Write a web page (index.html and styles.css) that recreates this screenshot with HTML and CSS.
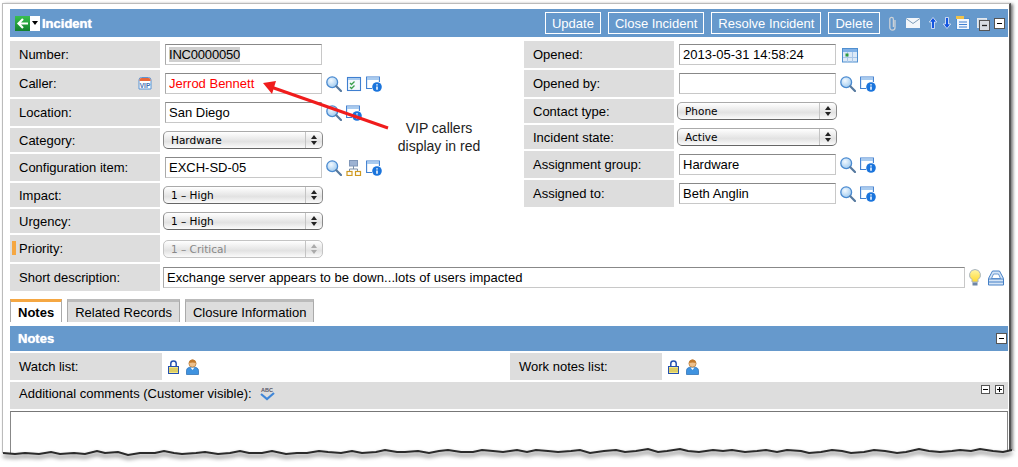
FILE: index.html
```html
<!DOCTYPE html>
<html lang="en">
<head>
    <meta charset="UTF-8">
    <title>Incident</title>
    <link rel="stylesheet" href="styles.css">
</head>
<body>
<svg width="0" height="0" class="defs">
    <defs>
        <radialGradient id="g-lens" cx=".4" cy=".35" r=".7">
            <stop offset="0" stop-color="#f2f9ff"/>
            <stop offset="1" stop-color="#9cc8ee"/>
        </radialGradient>
        <linearGradient id="g-back" x1="0" y1="0" x2="0" y2="1">
            <stop offset="0" stop-color="#39c04e"/>
            <stop offset="1" stop-color="#12802c"/>
        </linearGradient>
        <linearGradient id="g-bulb" x1="0" y1="0" x2="0" y2="1">
            <stop offset="0" stop-color="#fff6a8"/>
            <stop offset="1" stop-color="#ffd92e"/>
        </linearGradient>
    </defs>
    <symbol id="i-search" viewBox="0 0 16 16">
        <circle cx="6.200" cy="6.200" r="5.400" fill="url(#g-lens)" stroke="#4a8ad0" stroke-width="1.300"/>
        <path d="M10.300 10.300l4.700 4.700" stroke="#56799f" stroke-width="2.200" stroke-linecap="round"/>
    </symbol>
    <symbol id="i-info" viewBox="0 0 16 16">
        <path d="M6 12.500H.6V1h12.800v5" fill="#fff" stroke="#3f7fd0" stroke-width="1.100"/>
        <rect x="1" y="1.500" width="12" height="2.500" fill="#a9cbef"/>
        <circle cx="11" cy="11" r="4.800" fill="#1a74dc"/>
        <path d="M11 8.200v1.200M11 10.400v3.400" stroke="#fff" stroke-width="1.500"/>
    </symbol>
    <symbol id="i-lock" viewBox="0 0 11 14">
        <path d="M2.800 7V3.600a2.700 2.700 0 0 1 5.400 0V7" fill="none" stroke="#2450b0" stroke-width="1.500"/>
        <rect x=".5" y="6.500" width="10" height="7" fill="#f4e67e" stroke="#2450b0"/>
        <path d="M1 9h9M1 11h9" stroke="#b9a53c" stroke-width=".8"/>
    </symbol>
    <symbol id="i-user" viewBox="0 0 13 16">
        <path d="M.5 15.500v-4c0-2.500 2.500-3.500 6-3.500s6 1 6 3.500v4z" fill="#3f93e0" stroke="#2468b0" stroke-width=".7"/>
        <path d="M4.500 8.500l2 2.500 2-2.500z" fill="#fff"/>
        <circle cx="6.500" cy="4.500" r="3.600" fill="#eec08c" stroke="#b3762f" stroke-width=".7"/>
        <path d="M3 4c.5-2.500 2-3.500 3.500-3.500S9.500 1.500 10 4C8 3.200 5 3.200 3 4z" fill="#c47a2c"/>
    </symbol>
</svg>

<div class="frame">
    <header class="bar">
        <span class="back">
            <svg width="15" height="15" viewBox="0 0 15 15"><rect width="15" height="15" fill="url(#g-back)"/><path d="M13 7.500H4.500M8 3l-4.500 4.500L8 12" fill="none" stroke="#fff" stroke-width="2.200"/></svg>
            <i class="caret"></i>
        </span>
        <h1>Incident</h1>
        <div class="bar-right">
            <button class="btn">Update</button>
            <button class="btn">Close Incident</button>
            <button class="btn">Resolve Incident</button>
            <button class="btn">Delete</button>
            <svg class="tool-clip" width="9" height="15" viewBox="0 0 9 15"><path d="M7 4v7.500a2.600 2.600 0 0 1-5.200 0V3.200a1.800 1.800 0 0 1 3.600 0V11" fill="none" stroke="#ccd2d8" stroke-width="1.300"/></svg>
            <svg class="tool-mail" width="14" height="10" viewBox="0 0 14 10"><rect width="14" height="10" fill="#f2f6fa"/><path d="M0 .5l7 5 7-5" fill="none" stroke="#7f9db8"/></svg>
            <svg class="tool-up" width="8" height="12" viewBox="0 0 8 12"><path d="M4 .5L7.700 5H5.500v6.500h-3V5H.3z" fill="#1456e0" stroke="#fff" stroke-width=".7"/></svg>
            <svg class="tool-down" width="8" height="12" viewBox="0 0 8 12"><path d="M4 11.500L7.700 7H5.500V.5h-3V7H.3z" fill="#1456e0" stroke="#fff" stroke-width=".7"/></svg>
            <svg class="tool-list" width="14" height="14" viewBox="0 0 14 14"><rect x=".5" y="2.500" width="13" height="11" fill="#f2f7fd" stroke="#4f8fd0"/><rect width="8" height="3" fill="#f0c24a"/><path d="M3 6h8M3 8.500h8M3 11h8" stroke="#3f7fd0"/></svg>
            <svg class="tool-split" width="13" height="13" viewBox="0 0 13 13"><rect x=".5" y=".5" width="9" height="9" fill="#cfd9e4" stroke="#e4e9ee"/><rect x="2.500" y="2.500" width="10" height="10" fill="#d8dde2" stroke="#555"/><path d="M5 7.500h5" stroke="#222" stroke-width="1.300"/></svg>
            <span class="box box-end"></span>
        </div>
    </header>

    <div class="form">
        <div class="col">
            <div class="row">
                <label class="lbl">Number:</label>
                <div class="val"><div class="txt txt-div"><span class="hl">INC0000050</span></div></div>
            </div>
            <div class="row">
                <label class="lbl">Caller:
                    <svg class="vip" width="14" height="13" viewBox="0 0 14 13"><path d="M1 12V3q0-2.500 2.500-2.500h7Q13 .5 13 3v9z" fill="#fff" stroke="#5a94d4"/><path d="M1.500 4V3q0-2 2-2h7q2 0 2 2v1z" fill="#e8683a"/><text x="7" y="10.500" class="vip-t">VIP</text></svg>
                </label>
                <div class="val">
                    <input class="txt txt-red" value="Jerrod Bennett">
                    <svg class="ic"><use href="#i-search"/></svg>
                    <svg class="ic" viewBox="0 0 16 16"><rect x="1.500" y="1.500" width="13" height="13" fill="#f3f8fd" stroke="#3f7fd0" stroke-width="1.100"/><rect x="2" y="2" width="12" height="2" fill="#a9cbef"/><path d="M4 7l1.500 1.500L8.500 5.500M4 11l1.500 1.500 3-3" fill="none" stroke="#3aa04a" stroke-width="1.300"/></svg>
                    <svg class="ic"><use href="#i-info"/></svg>
                </div>
            </div>
            <div class="row">
                <label class="lbl">Location:</label>
                <div class="val">
                    <input class="txt" value="San Diego">
                    <svg class="ic"><use href="#i-search"/></svg>
                    <svg class="ic"><use href="#i-info"/></svg>
                </div>
            </div>
            <div class="row row-s">
                <label class="lbl">Category:</label>
                <div class="val"><div class="sel">Hardware</div></div>
            </div>
            <div class="row">
                <label class="lbl">Configuration item:</label>
                <div class="val">
                    <input class="txt" value="EXCH-SD-05">
                    <svg class="ic"><use href="#i-search"/></svg>
                    <svg class="ic" viewBox="0 0 16 16"><path d="M7.500 6v3M3.500 12V9h8v3" fill="none" stroke="#7a8ea8"/><rect x="3.500" y=".5" width="8" height="5.500" fill="#9db2d2" stroke="#7f96b8"/><rect x="1" y="11.500" width="5" height="4" fill="#fff" stroke="#d09a20" stroke-width="1.200"/><rect x="9.500" y="11.500" width="5" height="4" fill="#fff" stroke="#d09a20" stroke-width="1.200"/></svg>
                    <svg class="ic"><use href="#i-info"/></svg>
                </div>
            </div>
            <div class="row row-s">
                <label class="lbl">Impact:</label>
                <div class="val"><div class="sel">1 – High</div></div>
            </div>
            <div class="row row-s">
                <label class="lbl">Urgency:</label>
                <div class="val"><div class="sel">1 – High</div></div>
            </div>
            <div class="row">
                <label class="lbl lbl-mark">Priority:</label>
                <div class="val"><div class="sel sel-off">1 – Critical</div></div>
            </div>
        </div>

        <div class="col">
            <div class="row">
                <label class="lbl">Opened:</label>
                <div class="val">
                    <input class="txt" value="2013-05-31 14:58:24">
                    <svg class="ic ic-cal" viewBox="0 0 16 16"><rect x=".5" y="1.500" width="15" height="13.500" fill="#dce9f7" stroke="#4f8fd0"/><rect x="1" y="2" width="14" height="3" fill="#7fb0e6"/><path d="M1 10.500h14M5.500 5v10M10.500 5v10" stroke="#a9c6e8"/><rect x="3.500" y="6.500" width="3" height="3" fill="#2f9a42"/></svg>
                </div>
            </div>
            <div class="row">
                <label class="lbl">Opened by:</label>
                <div class="val">
                    <input class="txt" value="">
                    <svg class="ic"><use href="#i-search"/></svg>
                    <svg class="ic"><use href="#i-info"/></svg>
                </div>
            </div>
            <div class="row row-s">
                <label class="lbl">Contact type:</label>
                <div class="val"><div class="sel">Phone</div></div>
            </div>
            <div class="row row-s">
                <label class="lbl">Incident state:</label>
                <div class="val"><div class="sel">Active</div></div>
            </div>
            <div class="row">
                <label class="lbl">Assignment group:</label>
                <div class="val">
                    <input class="txt" value="Hardware">
                    <svg class="ic"><use href="#i-search"/></svg>
                    <svg class="ic"><use href="#i-info"/></svg>
                </div>
            </div>
            <div class="row">
                <label class="lbl">Assigned to:</label>
                <div class="val">
                    <input class="txt" value="Beth Anglin">
                    <svg class="ic"><use href="#i-search"/></svg>
                    <svg class="ic"><use href="#i-info"/></svg>
                </div>
            </div>
        </div>
    </div>

    <div class="row row-short">
        <label class="lbl">Short description:</label>
        <div class="val">
            <input class="txt txt-wide" value="Exchange server appears to be down...lots of users impacted">
            <svg class="bulb" width="12" height="17" viewBox="0 0 12 17"><path d="M6 .5a5.500 5.500 0 0 1 3 10.100V13H3v-2.400A5.500 5.500 0 0 1 6 .5z" fill="url(#g-bulb)" stroke="#a8b4c2"/><rect x="3.500" y="13.500" width="5" height="3" fill="#6f86a6"/></svg>
            <svg class="stack" width="16" height="16" viewBox="0 0 16 16"><path d="M4.500 1h7l4 7.500V15H.5V8.500z" fill="#d4e4f6" stroke="#4680c6"/><path d="M3.500 8.500L5.500 4h5l2 4.500z" fill="#fff" stroke="#4680c6" stroke-width=".8"/><path d="M.5 9h15M.5 12h15" stroke="#4680c6"/></svg>
        </div>
    </div>

    <div class="tabs">
        <span class="tab tab-on">Notes</span>
        <span class="tab">Related Records</span>
        <span class="tab">Closure Information</span>
    </div>

    <section class="notes">
        <div class="bar bar-notes">
            <h2>Notes</h2>
            <span class="box"></span>
        </div>
        <div class="watch">
            <div class="row">
                <label class="lbl lbl-wide">Watch list:</label>
                <div class="val val-icons">
                    <svg class="lock"><use href="#i-lock"/></svg>
                    <svg class="user"><use href="#i-user"/></svg>
                </div>
            </div>
            <div class="row">
                <label class="lbl lbl-wide">Work notes list:</label>
                <div class="val val-icons">
                    <svg class="lock"><use href="#i-lock"/></svg>
                    <svg class="user"><use href="#i-user"/></svg>
                </div>
            </div>
        </div>
        <div class="comments">
            <span>Additional comments (Customer visible):</span>
            <svg class="abc" width="17" height="14" viewBox="0 0 17 14"><text x="8" y="5" class="abc-t">ABC</text><path d="M2 7l6 5 7-6" fill="none" stroke="#3f86d8" stroke-width="2.200"/></svg>
            <span class="comments-btns">
                <span class="box box-sm"></span>
                <span class="box box-sm box-plus"></span>
            </span>
        </div>
        <div class="textarea"></div>
    </section>
</div>

<!-- callout drawn over the form -->
<svg class="arrow" width="140" height="60" viewBox="0 0 140 60">
    <path d="M130 51L13 10" stroke="#f01c1c" stroke-width="3"/>
    <path d="M5 6l13-2-4 13z" fill="#f01c1c"/>
</svg>
<div class="callout">VIP callers<br>display in red</div>

<!-- torn paper edge at the bottom -->
<svg class="torn" width="1018" height="30" viewBox="0 0 1018 30">
    <path class="torn-white" d="M3 9l12 1 10-1 14 1 12-2 9 2 14-1 11 1 12-3 8 2 13-1 10 3 12-2 15 0 9-2 10 2 8 1 14-1 9-1 13 2 12-1 10-2 9 2 13 0 10-2 14 3 11-1 10 0 12-2 9 1 13 1 11-2 10 2 14-1 9-2 12 2 8 0 13-1 11 2 10-2 9-1 13 2 12 0 9-2 11 1 10 1 14-2 10 2 9-2 12 1 10 1 13-1 9-1 10 3 14-2 12-1 9 2 11-1 12-2 10 3 9-1 13-2 8 2 11 1 14-2 10 1 9-1 13 2 12-1 9-1 11 2 10-2 14 1 8 2 12-1 11-2 10 1 9 2 13-1 10-2 11 1 12 2 9-1 13-3 10 2 11 1 12-1 8-1 11 1 9-2 13 2 10 1 9-2L1018 9V30H0V9z"/>
    <path class="torn-shadow" d="M3 9l12 1 10-1 14 1 12-2 9 2 14-1 11 1 12-3 8 2 13-1 10 3 12-2 15 0 9-2 10 2 8 1 14-1 9-1 13 2 12-1 10-2 9 2 13 0 10-2 14 3 11-1 10 0 12-2 9 1 13 1 11-2 10 2 14-1 9-2 12 2 8 0 13-1 11 2 10-2 9-1 13 2 12 0 9-2 11 1 10 1 14-2 10 2 9-2 12 1 10 1 13-1 9-1 10 3 14-2 12-1 9 2 11-1 12-2 10 3 9-1 13-2 8 2 11 1 14-2 10 1 9-1 13 2 12-1 9-1 11 2 10-2 14 1 8 2 12-1 11-2 10 1 9 2 13-1 10-2 11 1 12 2 9-1 13-3 10 2 11 1 12-1 8-1 11 1 9-2 13 2 10 1 9-2"/>
</svg>
</body>
</html>
```

FILE: styles.css
```css
html, body {
    margin: 0;
    height: 467px;
    overflow: hidden;
    background: #fff;
}

body {
    position: relative;
    font-family: "Liberation Sans", Arial, sans-serif;
    font-size: 13px;
    color: #000;
}

.defs {
    position: absolute;
}

.frame {
    box-sizing: border-box;
    width: 1009px;
    height: 464px;
    margin: 3px 0 0 2px;
    padding: 5px 1px 0 7px;
    border-top: 1px solid #bbb;
    border-left: 1px solid #bbb;
    border-right: 2px solid #555;
    box-shadow: 2px 1px 3px #777;
    background: #fff;
}

.bar {
    display: flex;
    align-items: center;
    background: #6699cc;
    color: #fff;
    height: 28px;
    padding: 0 3px 0 5px;
}

.bar h1, .bar h2 {
    margin: 0;
    font-size: 13px;
    font-weight: bold;
    text-shadow: 0 0 1px #fff;
}

.back {
    display: flex;
    align-items: center;
    width: 25px;
    height: 15px;
    background: #fff;
    margin-right: 2px;
}

.caret {
    margin-left: 2px;
    border: 3px solid transparent;
    border-top: 4px solid #000;
    border-bottom: 0;
}

.bar-right {
    margin-left: auto;
    display: flex;
    align-items: center;
    gap: 7px;
}

.btn {
    height: 22px;
    padding: 0 6px;
    border: 1px solid #fff;
    background: transparent;
    color: #fff;
    font: 13px "Liberation Sans", Arial, sans-serif;
}

.tool-clip {
    margin-left: 1px;
}

.tool-mail, .tool-up {
    margin-left: 2px;
}

.tool-down {
    margin-left: -1px;
}

.tool-list {
    margin-left: -2px;
    margin-top: -1px;
}

.tool-split {
    margin-top: 2px;
}

.box {
    box-sizing: border-box;
    width: 11px;
    height: 11px;
    border: 1px solid #555;
    background: #fff;
    position: relative;
    flex: none;
}

.box::before {
    content: "";
    position: absolute;
    left: 2px;
    right: 2px;
    top: 4px;
    height: 1px;
    background: #000;
}

.box-end {
    margin-left: -3px;
}

.box-plus::after {
    content: "";
    position: absolute;
    top: 1px;
    bottom: 1px;
    left: 3px;
    width: 1px;
    background: #000;
}

.form {
    display: grid;
    grid-template-columns: 514px 1fr;
    margin-top: 4px;
}

.col {
    display: flex;
    flex-direction: column;
    gap: 2px;
}

.row {
    display: flex;
    height: 27px;
}

.row-s {
    height: 24px;
}

.lbl {
    box-sizing: border-box;
    width: 150px;
    flex: none;
    display: flex;
    align-items: center;
    justify-content: space-between;
    padding: 0 8px 0 9px;
    background: #dddddd;
}

.lbl-mark {
    position: relative;
}

.lbl-mark::before {
    content: "";
    position: absolute;
    left: 2px;
    top: 6px;
    width: 4px;
    height: 14px;
    background: #f5a742;
}

.lbl-wide {
    width: 152px;
}

.val {
    display: flex;
    align-items: center;
    padding-left: 5px;
    gap: 4px;
}

.txt {
    box-sizing: border-box;
    width: 157px;
    height: 21px;
    padding: 0 3px;
    border: 1px solid #c8c8c8;
    border-top-color: #888;
    border-left-color: #aaa;
    font: 13px "Liberation Sans", Arial, sans-serif;
    margin: 0;
}

.txt-div {
    display: flex;
    align-items: center;
}

.hl {
    background: #cfcfcf;
    letter-spacing: -.2px;
    line-height: 15px;
}

.txt-red {
    color: #f00;
}

.txt-wide {
    width: 802px;
    margin-left: -2px;
    letter-spacing: .05px;
}

.ic {
    width: 16px;
    height: 16px;
    flex: none;
}

.ic-cal {
    margin-left: 2px;
}

.bulb {
    margin-right: 3px;
}

.sel {
    box-sizing: border-box;
    position: relative;
    width: 160px;
    height: 18px;
    margin-left: -2px;
    padding-left: 7px;
    border: 1px solid #8a8a8a;
    border-bottom-color: #666;
    border-top-color: #aaa;
    border-radius: 5px;
    background:
        linear-gradient(#c4c4c4, #c4c4c4) right 16px top 0 / 1px 100% no-repeat,
        linear-gradient(#fff, #e2e2e2 60%, #fbfbfb);
    font-family: "DejaVu Sans", sans-serif;
    font-size: 10.5px;
    line-height: 16px;
}

.sel::before {
    content: "";
    position: absolute;
    right: 5px;
    top: 3px;
    border: 3px solid transparent;
    border-top: 0;
    border-bottom: 4px solid #222;
}

.sel::after {
    content: "";
    position: absolute;
    right: 5px;
    bottom: 3px;
    border: 3px solid transparent;
    border-bottom: 0;
    border-top: 4px solid #222;
}

.sel-off {
    color: #888;
    border-color: #c4c4c4;
}

.sel-off::before {
    border-bottom-color: #aaa;
}

.sel-off::after {
    border-top-color: #aaa;
}

.row-short {
    margin-top: 2px;
}

.tabs {
    display: flex;
    gap: 5px;
    margin-top: 8px;
    height: 23px;
}

.tab {
    display: flex;
    align-items: center;
    padding: 0 7px;
    background: #dddddd;
    border: 1px solid #aaa;
    border-top: 3px solid #bbb;
    border-bottom: 0;
    box-sizing: border-box;
}

.tab-on {
    background: #fff;
    border-top-color: #f5a742;
    font-weight: bold;
}

.notes {
    margin-top: 4px;
}

.bar-notes {
    height: 25px;
    padding: 0 1px 0 8px;
    justify-content: space-between;
}

.watch {
    display: grid;
    grid-template-columns: 500px 1fr;
    margin-top: 2px;
}

.val-icons {
    padding-left: 6px;
    gap: 7px;
}

.lock {
    width: 11px;
    height: 14px;
}

.user {
    width: 13px;
    height: 16px;
}

.comments {
    display: flex;
    align-items: center;
    box-sizing: border-box;
    height: 27px;
    margin-top: 2px;
    padding: 0 0 4px 9px;
    background: #dddddd;
    position: relative;
}

.abc {
    margin-left: 7px;
}

.abc-t, .vip-t {
    font-family: "Liberation Sans", Arial, sans-serif;
    font-weight: bold;
    text-anchor: middle;
}

.abc-t {
    font-size: 5.500px;
    fill: #556;
}

.vip-t {
    font-size: 6.500px;
    fill: #3f6fb0;
}

.comments-btns {
    position: absolute;
    right: 4px;
    top: 3px;
    display: flex;
    gap: 5px;
}

.box-sm {
    width: 9px;
    height: 9px;
}

.box-sm::before {
    left: 1px;
    right: 1px;
    top: 3px;
}

.textarea {
    box-sizing: border-box;
    height: 60px;
    margin-top: 2px;
    border: 1px solid #888;
    border-top-color: #777;
    background: #fff;
}

.arrow {
    position: absolute;
    left: 258px;
    top: 77px;
}

.callout {
    position: absolute;
    left: 385px;
    top: 119px;
    width: 108px;
    text-align: center;
    font-size: 14px;
    line-height: 18px;
    color: #222;
}

.torn {
    position: absolute;
    left: 0;
    top: 444px;
}

.torn-white {
    fill: #fff;
}

.torn-shadow {
    fill: none;
    stroke: #2a2a2a;
    stroke-width: 2;
    filter: drop-shadow(0 3px 2px #555);
}
```
